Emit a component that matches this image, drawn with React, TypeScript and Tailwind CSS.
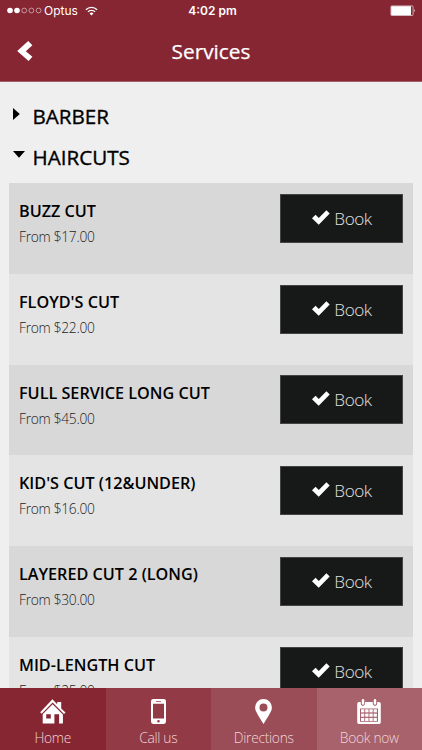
import type { ReactNode } from "react";

const services = [
  { name: "BUZZ CUT", price: "$17.00" },
  { name: "FLOYD'S CUT", price: "$22.00" },
  { name: "FULL SERVICE LONG CUT", price: "$45.00" },
  { name: "KID'S CUT (12&UNDER)", price: "$16.00" },
  { name: "LAYERED CUT 2 (LONG)", price: "$30.00" },
  { name: "MID-LENGTH CUT", price: "$25.00" },
];

function StatusBar() {
  return (
    <div className="grid h-[22px] grid-cols-3 items-center pr-[6px] pl-[7px] font-['Inter'] text-[12px] leading-none">
      <div className="flex items-center">
        <svg width="35" height="8" viewBox="0 0 35 8" fill="none" stroke="white">
          <circle cx="3" cy="3.5" r="2.8" fill="white" stroke="none" />
          <circle cx="10" cy="3.5" r="2.8" fill="white" stroke="none" />
          <circle cx="17.2" cy="3.5" r="2.4" strokeWidth="0.5" />
          <circle cx="24.4" cy="3.5" r="2.4" strokeWidth="0.5" />
          <circle cx="31.6" cy="3.5" r="2.4" strokeWidth="0.5" />
        </svg>
        <span className="ml-[2px] w-[36px] text-[12px]">Optus</span>
        <svg className="ml-[5px] mb-px" width="13" height="10" viewBox="0 0 14 10" fill="none" stroke="white" strokeWidth="1.5">
          <path d="M1 3.6a8.4 8.4 0 0 1 12 0" />
          <path d="M3.2 5.9a5.4 5.4 0 0 1 7.6 0" />
          <path d="M4.9 7.7a3 3 0 0 1 4.2 0L7 9.8z" fill="white" stroke="none" />
        </svg>
      </div>
      <span className="ml-[2px] text-center text-[12px] font-semibold whitespace-nowrap">4:02 pm</span>
      <svg className="mb-[2px] justify-self-end" width="26" height="11" viewBox="0 0 26 11">
        <rect x="0.9" y="0.9" width="22.2" height="9.6" rx="1" fill="none" stroke="white" strokeWidth="0.6" />
        <rect x="1.2" y="1.2" width="19.8" height="9" fill="white" />
        <path d="M24 4.1q1.4 1.6 0 3.2z" fill="white" />
      </svg>
    </div>
  );
}

function Header() {
  return (
    <header className="h-[82px] shrink-0 border-b border-[#a0606a] bg-[#852632] text-white">
      <StatusBar />
      <div className="grid h-[58px] grid-cols-[60px_1fr_60px] items-center">
        <button className="pl-[17px]">
          <svg width="16" height="20" viewBox="0 0 16 20" fill="white">
            <path d="M0.2 10 11.2 0 15.4 4.3 8.8 10.2 15.4 15.7 11.6 20z" />
          </svg>
        </button>
        <h1 className="mt-[2px] text-center text-[20.8px] [-webkit-text-stroke:0.25px_white]">Services</h1>
      </div>
    </header>
  );
}

function BookButton() {
  return (
    <button className="mt-[10.5px] flex h-[49px] w-[123px] shrink-0 items-center justify-center border border-[#444] bg-[#171918] text-[17.2px] font-light tracking-[-0.5px] text-[#e0e0e0]">
      <svg className="mr-[4px] mb-[2px] ml-px" width="18" height="15" viewBox="0 0 18 15" fill="white">
        <path d="M0 8.2 3.6 4.8 6.8 7.9 14.4 0.2 17.7 3.4 6.7 14.8z" />
      </svg>
      <span className="mt-[1px]">Book</span>
    </button>
  );
}

const tabs: { label: string; bg: string; icon: ReactNode }[] = [
  {
    label: "Home",
    bg: "bg-[#852632]",
    icon: (
      <svg width="26" height="25" viewBox="0 0 26 25" fill="white">
        <path d="M0.2 13.2 12.4 0.3 17.2 5.2V3h4v6.4L25.5 13.6 24 15 12.6 3.4 1.6 14.8z" />
        <path fillRule="evenodd" d="M2.7 15.2 12.6 5.2 22.9 15.6V24.5H19.1V15.2H14.4V24.5H2.7zM6.2 15.2V19.6H10.8V15.2z" />
      </svg>
    ),
  },
  {
    label: "Call us",
    bg: "bg-[#923b46]",
    icon: (
      <svg width="15" height="25" viewBox="0 0 15 25" fill="white">
        <path fillRule="evenodd" d="M2.4 0H12.8Q15 0 15 2.2V22.6Q15 25 12.8 25H2.2Q0 25 0 22.6V2.2Q0 0 2.4 0zM2 4.8V19.5H13V4.8zM5 2.2V3H10V2.2zM7.5 21A1.3 1.3 0 1 0 7.5 23.6 1.3 1.3 0 1 0 7.5 21z" />
      </svg>
    ),
  },
  {
    label: "Directions",
    bg: "bg-[#9b4d57]",
    icon: (
      <svg width="17" height="25" viewBox="0 0 17 25" fill="white">
        <path fillRule="evenodd" d="M8.5 0A8.4 8.4 0 0 1 16.9 8.4C16.9 12 13.8 16.2 8.5 25 3.2 16.2 0.1 12 0.1 8.4A8.4 8.4 0 0 1 8.5 0zM8.5 4.6A4 4 0 1 0 8.5 12.6 4 4 0 1 0 8.5 4.6z" />
      </svg>
    ),
  },
  {
    label: "Book now",
    bg: "bg-[#a7626b]",
    icon: (
      <svg width="24" height="25" viewBox="0 0 24 25">
        <path fill="white" fillRule="evenodd" d="M2 3H3.8V5.2Q5.8 8.6 8 5.2V3H15.8V5.2Q18 8.6 20.2 5.2V3H22Q23.8 3 23.8 5V23.2Q23.8 25 22 25H2Q0.2 25 0.2 23.2V5Q0.2 3 2 3zM3 9.4V22.7H21V9.4z" />
        <rect x="4.8" y="0" width="2.4" height="5.8" rx="1.2" fill="white" />
        <rect x="16.8" y="0" width="2.4" height="5.8" rx="1.2" fill="white" />
        <g fill="white">
          {[10.3, 14.6, 18.9].map((y) =>
            [4, 8.2, 12.4, 16.6].map((x) => (
              <rect key={`${x}-${y}`} x={x} y={y} width="3.3" height="3.1" />
            ))
          )}
        </g>
      </svg>
    ),
  },
];

export default function App() {
  return (
    <div className="flex h-[750px] w-[422px] flex-col overflow-hidden bg-[#efefef] font-['Open_Sans','Noto_Sans',sans-serif] text-black">
      <Header />

      <main className="min-h-0 flex-1 overflow-hidden px-[9px] pt-[14px]">
        <div className="flex h-[41px] items-center">
          <svg className="mb-[6px] ml-[4px]" width="7" height="12" viewBox="0 0 7 12">
            <path d="M0 0 6.8 6 0 12z" />
          </svg>
          <h2 className="ml-[12.5px] text-[20.6px] [-webkit-text-stroke:0.35px_black]">BARBER</h2>
        </div>
        <div className="flex h-[41px] items-center">
          <svg className="mb-[6px] ml-[4px]" width="12" height="7" viewBox="0 0 12 7">
            <path d="M0 0H12L6 6.8z" />
          </svg>
          <h2 className="ml-[7.5px] text-[20.6px] [-webkit-text-stroke:0.35px_black]">HAIRCUTS</h2>
        </div>

        <ul className="mt-[5.4px]">
          {services.map((s) => (
            <li
              key={s.name}
              className="flex h-[90.7px] justify-between px-[10px] odd:bg-[#d8d8d8] even:bg-[#e4e4e4]"
            >
              <div className="pt-[16px]">
                <h3 className="text-[16.2px] leading-[24px] font-semibold">{s.name}</h3>
                <p className="mt-[4px] text-[13.8px] leading-[20px] font-light tracking-[-0.3px] text-[#222]">
                  From {s.price}
                </p>
              </div>
              <BookButton />
            </li>
          ))}
        </ul>
      </main>

      <nav className="grid h-[62px] shrink-0 grid-cols-4 text-[#f0d5d8]">
        {tabs.map((tab) => (
          <a key={tab.label} className={`flex flex-col items-center pt-[11px] ${tab.bg}`}>
            {tab.icon}
            <span className="mt-[4px] text-[13.8px] leading-[20px] font-light tracking-[-0.3px]">{tab.label}</span>
          </a>
        ))}
      </nav>
    </div>
  );
}
